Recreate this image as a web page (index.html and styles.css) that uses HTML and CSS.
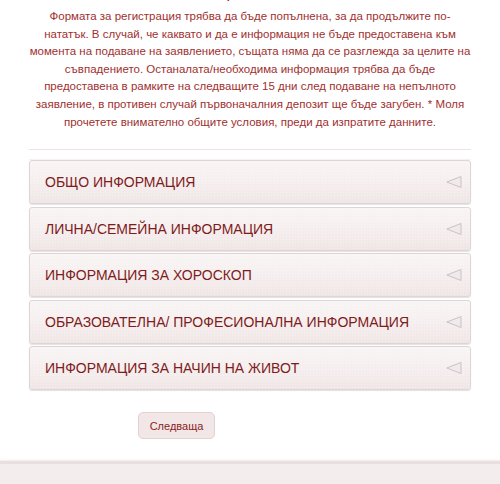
FILE: index.html
```html
<!DOCTYPE html>
<html lang="bg">
<head>
<meta charset="utf-8">
<link rel="stylesheet" href="styles.css">
</head>
<body>
<main class="content">
  <h2 class="title">ИНФОРМАЦИЯ ЗА ЧЛЕНОВЕ</h2>
  <p class="intro">Формата за регистрация трябва да бъде попълнена, за да продължите по-нататък. В случай, че каквато и да е информация не бъде предоставена към момента на подаване на заявлението, същата няма да се разглежда за целите на съвпадението. Останалата/необходима информация трябва да бъде предоставена в рамките на следващите 15 дни след подаване на непълното заявление, в противен случай първоначалния депозит ще бъде загубен. * Моля прочетете внимателно общите условия, преди да изпратите данните.</p>
  <hr class="sep">
  <div class="accordion">
    <div class="acc-item"><span>ОБЩО ИНФОРМАЦИЯ</span><svg class="arrow" width="16" height="12" viewBox="0 0 16 12"><polygon points="15,0.5 0.8,6 15,11.5" /></svg></div>
    <div class="acc-item"><span>ЛИЧНА/СЕМЕЙНА ИНФОРМАЦИЯ</span><svg class="arrow" width="16" height="12" viewBox="0 0 16 12"><polygon points="15,0.5 0.8,6 15,11.5" /></svg></div>
    <div class="acc-item"><span>ИНФОРМАЦИЯ ЗА ХОРОСКОП</span><svg class="arrow" width="16" height="12" viewBox="0 0 16 12"><polygon points="15,0.5 0.8,6 15,11.5" /></svg></div>
    <div class="acc-item"><span>ОБРАЗОВАТЕЛНА/ ПРОФЕСИОНАЛНА ИНФОРМАЦИЯ</span><svg class="arrow" width="16" height="12" viewBox="0 0 16 12"><polygon points="15,0.5 0.8,6 15,11.5" /></svg></div>
    <div class="acc-item"><span>ИНФОРМАЦИЯ ЗА НАЧИН НА ЖИВОТ</span><svg class="arrow" width="16" height="12" viewBox="0 0 16 12"><polygon points="15,0.5 0.8,6 15,11.5" /></svg></div>
  </div>
  <div class="actions">
    <button class="btn" type="button">Следваща</button>
  </div>
</main>
<footer class="footer"></footer>
</body>
</html>
```
FILE: styles.css
```css
html, body {
  margin: 0;
  padding: 0;
  background: #ffffff;
  font-family: "Liberation Sans", Arial, sans-serif;
}

.content {
  width: 442px;
  margin: -17px 0 0 29px;
}

.title {
  margin: 0;
  font-size: 17px;
  line-height: 20px;
  font-weight: normal;
  text-align: center;
  color: #9b2b2b;
  letter-spacing: 0.5px;
}

.intro {
  margin: 5px 0 0;
  font-size: 11.5px;
  line-height: 17.6px;
  text-align: center;
  color: #a0302f;
}

.sep {
  margin: 18px 0 0;
  border: 0;
  height: 1px;
  background: #f1e1e2;
}

.accordion {
  margin-top: 9px;
  display: flex;
  flex-direction: column;
  gap: 2.5px;
  border-top: 1px solid #f6f2f2;
}

.acc-item {
  box-sizing: border-box;
  height: 44px;
  display: flex;
  align-items: center;
  justify-content: space-between;
  padding: 0 8px 0 15px;
  border: 1px solid #dcd6d6;
  border-radius: 3px;
  background:
    radial-gradient(circle, rgba(255,255,255,0.35) 0.6px, transparent 0.9px) 0 0 / 3px 3px,
    linear-gradient(to bottom, #f9f5f5 0%, #f5eded 60%, #efe5e5 100%);
  box-shadow: 0 1px 1px rgba(120, 90, 90, 0.18);
  color: #7e1b1b;
  font-size: 14px;
}

.arrow polygon {
  fill: #f1eaea;
  stroke: #cbc3c3;
  stroke-width: 1;
}

.actions {
  margin-top: 22px;
  padding-left: 109px;
}

.btn {
  box-sizing: border-box;
  width: 77px;
  height: 27px;
  padding: 0;
  font-family: "Liberation Sans", Arial, sans-serif;
  font-size: 11px;
  color: #8b1e1e;
  background: #f2e6e6;
  border: 1px solid #e2d2d2;
  border-radius: 5px;
}

.footer {
  margin-top: 22px;
  height: 30px;
  background: #f4eded;
  border-top: 3px solid #e9dfdf;
  box-shadow: 0 -1px 2px rgba(150, 120, 120, 0.15);
}
```
